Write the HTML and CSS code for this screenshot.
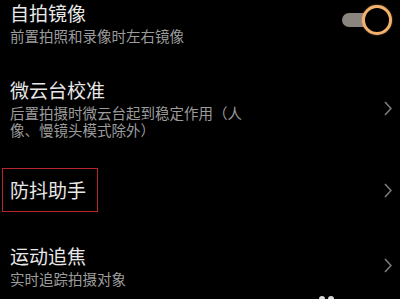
FILE: index.html
```html
<!DOCTYPE html>
<html lang="zh-CN">
  <head>
    <meta name="viewport" content="width=device-width, initial-scale=1" />
    <title>相机设置</title>
    <link rel="stylesheet" href="styles.css">
  </head>

  <body>
    <div class="list">
      <div class="row first">
        <div class="text">
          <div class="title">自拍镜像</div>
          <div class="sub">前置拍照和录像时左右镜像</div>
        </div>
        <div class="toggle">
          <div class="track"></div>
          <div class="knob"></div>
        </div>
      </div>

      <div class="row">
        <div class="text">
          <div class="title">微云台校准</div>
          <div class="sub">后置拍摄时微云台起到稳定作用（人像、慢镜头模式除外）</div>
        </div>
        <svg class="chevron" width="8" height="15" viewBox="0 0 8 15">
          <polyline points="1,1 7,7.5 1,14" fill="none" stroke="#7c7c7c" stroke-width="1.6" />
        </svg>
      </div>

      <div class="row single">
        <div class="text">
          <div class="title"><span class="mark">防抖助手</span></div>
        </div>
        <svg class="chevron" width="8" height="15" viewBox="0 0 8 15">
          <polyline points="1,1 7,7.5 1,14" fill="none" stroke="#7c7c7c" stroke-width="1.6" />
        </svg>
      </div>

      <div class="row">
        <div class="text">
          <div class="title">运动追焦</div>
          <div class="sub">实时追踪拍摄对象</div>
        </div>
        <svg class="chevron" width="8" height="15" viewBox="0 0 8 15">
          <polyline points="1,1 7,7.5 1,14" fill="none" stroke="#7c7c7c" stroke-width="1.6" />
        </svg>
      </div>
    </div>

    <div class="dots"><span></span><span></span></div>
  </body>
</html>
```

FILE: styles.css
```css
body {
  margin: 0;
  background-color: #000000;
  font-family: "Noto Sans CJK SC", "Noto Sans", sans-serif;
  overflow: hidden;
}

.list {
  display: flex;
  flex-direction: column;
}

.row {
  display: flex;
  align-items: center;
  justify-content: space-between;
  padding: 17px 8px 17px 10px;
}

.row.first {
  padding-top: 1px;
}

.row.single {
  padding-top: 23px;
  padding-bottom: 25px;
}

.title {
  font-size: 19px;
  line-height: 24px;
  color: #e8e8e8;
}

.sub {
  margin-top: 2px;
  max-width: 240px;
  font-size: 14.5px;
  line-height: 17px;
  color: #9c9c9c;
}

/* red frame drawn round the item, must not push the row */
.mark {
  display: inline-block;
  vertical-align: top;
  margin: -10px 0 -10px -8px;
  padding: 9px 11px 9px 7px;
  border: 1px solid #b8272c;
}

.chevron {
  display: block;
  flex-shrink: 0;
}

.toggle {
  position: relative;
  width: 50px;
  height: 30px;
  margin-bottom: 5px;
}

.track {
  position: absolute;
  left: 0;
  top: 8px;
  width: 40px;
  height: 14px;
  border-radius: 7px;
  background: #8b8580;
}

.knob {
  position: absolute;
  right: 0;
  top: 0;
  width: 30px;
  height: 30px;
  box-sizing: border-box;
  border: 3px solid #f2b26c;
  border-radius: 50%;
  background: #000000;
  box-shadow: 0 0 2px rgba(242, 178, 108, 0.6);
}

.dots {
  position: fixed;
  left: 319px;
  bottom: -3px;
  display: flex;
  gap: 3px;
}

.dots span {
  width: 6px;
  height: 6px;
  border-radius: 50%;
  background: #d8d8d8;
}
```
